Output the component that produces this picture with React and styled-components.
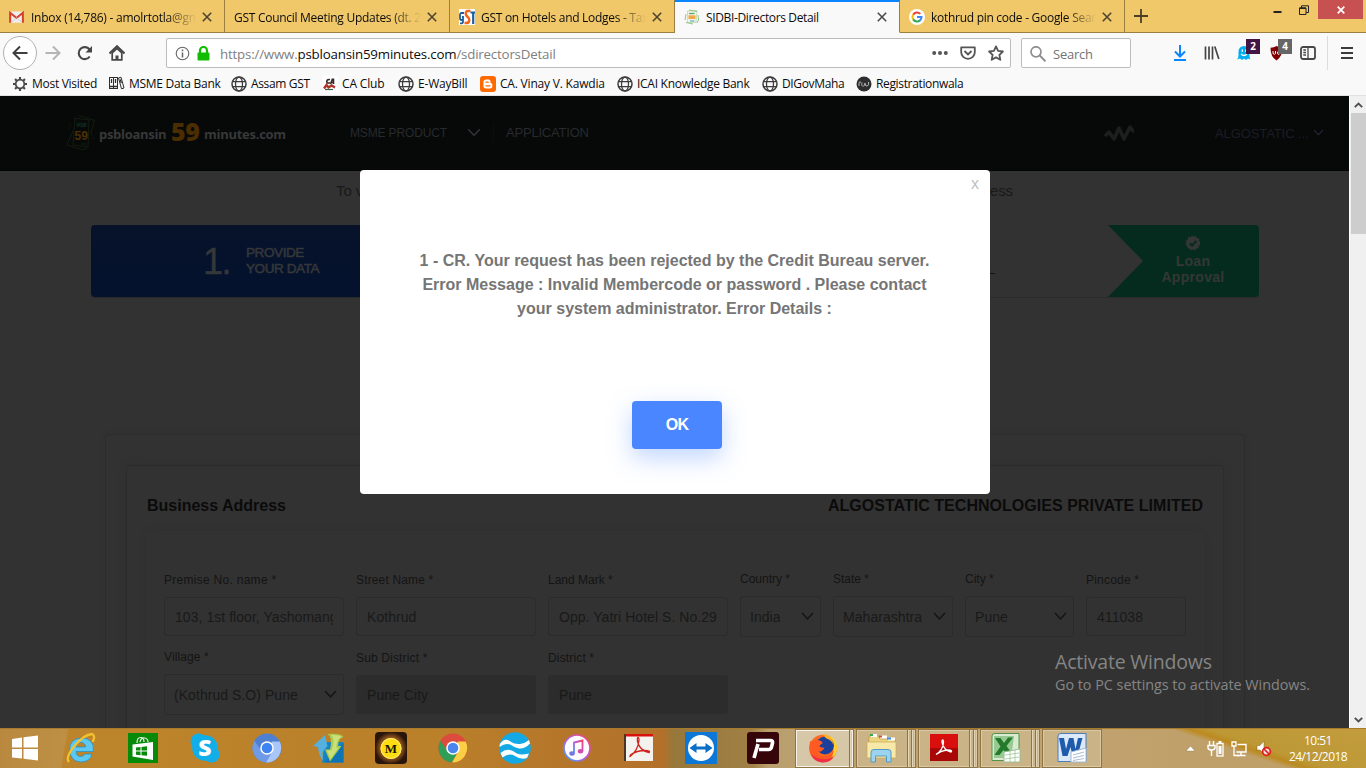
import React from "react";
import styled, { createGlobalStyle, css } from "styled-components";

const ui = `"Open Sans", "Noto Sans", sans-serif`;
const arial = `"Liberation Sans", Arial, sans-serif`;

const Global = createGlobalStyle`
  * { box-sizing: border-box; }
  body { margin: 0; overflow: hidden; background: #323232; }
  svg { display: block; flex: none; }
`;

const Screen = styled.div`
  width: 1366px; height: 768px; display: flex; flex-direction: column;
  overflow: hidden; font-family: ${ui}; color: #0c0c0d;
`;

/* ---------- tab strip ---------- */
const TabStrip = styled.div`
  height: 33px; flex: none; display: flex; background: #f0c869;
`;
const Tab = styled.div`
  width: 225px; height: 33px; display: flex; align-items: center; flex: none;
  padding: 0 12px 0 ${(p) => p.$pad || 9}px; font-size: 12px;
  letter-spacing: ${(p) => p.$ls || -0.28}px;
  border-right: 1px solid #9a7f40; border-bottom: 1px solid #9a7f40;
  ${(p) => p.$active && css`
    background: #f9f9fa; border-bottom-color: #f9f9fa; border-top: 2px solid #0a84ff;
    padding-bottom: 1px;
  `}
`;
const TabIcon = styled.span`width: ${(p) => p.$w || 22}px; flex: none; padding-top: 1px;`;
const TabText = styled.span`
  flex: 1; overflow: hidden; white-space: nowrap; line-height: 20px; padding-top: 3px;
  ${(p) => p.$fade && css`mask-image: linear-gradient(to right, #000 calc(100% - 30px), transparent);`}
`;
const TabClose = styled.span`margin-left: 6px; flex: none; padding-top: 1px;`;
const StripEnd = styled.div`
  flex: 1; display: flex; justify-content: space-between; align-items: flex-start;
  border-bottom: 1px solid #9a7f40; padding: 0 3px 0 9px;
`;
const NewTab = styled.div`padding-top: 9px;`;
const WinControls = styled.div`display: flex;`;
const WinBox = styled.div`
  height: 19px; width: ${(p) => p.$w}px; display: flex; align-items: center; justify-content: center;
  background: ${(p) => (p.$red ? "#c75050" : "transparent")};
`;

/* ---------- toolbar ---------- */
const Toolbar = styled.div`
  height: 40px; flex: none; background: #f9f9fa; display: flex; align-items: center; padding-left: 3px;
`;
const BackButton = styled.div`
  width: 34px; height: 34px; border-radius: 50%; border: 1px solid #b1b1b1; background: #fff;
  display: flex; align-items: center; justify-content: center;
`;
const NavButton = styled.div`
  width: 32px; display: flex; justify-content: center; margin-left: ${(p) => p.$ml || 0}px;
`;
const UrlBar = styled.div`
  width: 845px; height: 30px; margin-left: 33px; background: #fff; border: 1px solid #bcbcbc;
  border-radius: 2px; display: flex; align-items: center; padding: 0 6px 0 8px;
`;
const Url = styled.span`
  flex: 1; margin-left: 10px; font-size: 13.3px; color: #808080; white-space: nowrap; padding-top: 1px;
  letter-spacing: -0.19px;
  b { color: #0c0c0d; font-weight: 400; }
`;
const UrlActions = styled.div`display: flex; gap: 12px; align-items: center;`;
const SearchBox = styled.div`
  width: 110px; height: 30px; margin-left: 10px; background: #fff; border: 1px solid #bcbcbc;
  border-radius: 2px; display: flex; align-items: center; gap: 7px; padding: 1px 0 0 8px;
  font-size: 13px; letter-spacing: -0.25px; color: #737373;
`;
const ToolIcons = styled.div`display: flex; align-items: center; margin-left: 41px;`;
const ToolIcon = styled.div`width: ${(p) => p.$w || 16}px; margin-right: ${(p) => p.$mr || 0}px;`;
const BadgedIcon = styled(ToolIcon)`position: relative;`;
const Badge = styled.span`
  position: absolute; left: 9px; top: -6px; width: 14px; height: 15px; background: ${(p) => p.$c};
  color: #fff; font: 700 10px/15px ${ui}; text-align: center;
`;
const Divider = styled.div`width: 1px; height: 34px; background: #dcdcdd; margin: 0 13px 0 11px;`;

const Bookmarks = styled.div`
  height: 23px; flex: none; background: #f9f9fa; border-bottom: 1px solid #e1e1e2; display: flex;
  padding: 0 0 0 12px;
`;
const Bookmark = styled.div`
  width: ${(p) => p.$w}px; display: flex; align-items: center; gap: 4px; font-size: 12px;
  letter-spacing: ${(p) => p.$ls || -0.28}px; white-space: nowrap; flex: none; padding-bottom: 1px;
  color: #0c0c0d;
`;

/* ---------- page ---------- */
const Viewport = styled.div`height: 632px; flex: none; display: flex;`;
const Page = styled.div`
  width: 1349px; height: 632px; position: relative; overflow: hidden; background: #323232;
  font-family: ${arial};
`;
const Header = styled.header`
  height: 75px; background: #060908; display: flex; align-items: center; padding-left: 65px;
  border-bottom: 1px solid #030404;
`;
const Brand = styled.div`
  width: 285px; display: flex; align-items: center; font-family: ${ui}; font-weight: 700;
  font-size: 13px; color: #383838; height: 40px; white-space: nowrap;
`;
const BrandNumber = styled.span`
  font-size: 25px; font-weight: 800; color: #4b2d02; width: 33px; margin-left: 4px;
  line-height: 25px; padding-bottom: 3px; letter-spacing: -0.4px;
`;
const BrandWord = styled.span`
  width: ${(p) => p.$w}px; margin: 2px 0 0 ${(p) => p.$ml || 0}px; letter-spacing: ${(p) => p.$ls}px;
`;
const NavText = styled.span`
  font-size: ${(p) => p.$s || 13}px; color: ${(p) => p.$c || "#282a2f"}; width: ${(p) => p.$w}px;
  letter-spacing: ${(p) => p.$ls || 0}px; white-space: nowrap; padding-bottom: ${(p) => p.$pb || 0}px;
`;
const NavRule = styled.span`width: 1px; height: 18px; background: #0b0e0d; margin: 0 12px 0 12px;`;
const Spacer = styled.span`width: ${(p) => p.$w}px; flex: none;`;

const Intro = styled.div`
  height: 54px; padding: 11px 336px 0; display: flex; justify-content: space-between;
  font-size: 15px; line-height: 18px; color: #191919; letter-spacing: -0.1px;
`;
const Stepper = styled.div`
  width: 1168px; height: 73px; margin-left: 91px; display: flex; justify-content: space-between;
  border-radius: 4px; border-bottom: 1px solid #2a2a2a; position: relative;
`;
const StepOne = styled.div`
  width: 380px; height: 72px; border-radius: 4px 0 0 4px; background: linear-gradient(#07122a, #04122e);
  display: flex; align-items: center; padding-left: 112px; color: #353739;
`;
const StepNumber = styled.span`
  font-size: 36px; width: 43px; padding-top: 2px; letter-spacing: -1.5px; -webkit-text-stroke: 0.4px #353739;
`;
const StepLabel = styled.span`
  font-size: 13.5px; line-height: 16px; letter-spacing: -0.4px; padding-bottom: 1px;
  -webkit-text-stroke: 0.55px #353739;
`;
const StepTwo = styled.div`
  flex: 1; display: flex; justify-content: flex-end; align-items: flex-end; padding: 0 113px 20px 0;
  font-size: 14px; line-height: 16px; color: #0d141f;
`;
const StepDone = styled.div`
  width: 151px; height: 72px; background: #052b1e; border-radius: 0 4px 4px 0;
  clip-path: polygon(0 0, 100% 0, 100% 100%, 0 100%, 35px 50%);
  display: flex; flex-direction: column; align-items: center; padding: 10px 0 0 19px;
  font: 700 14px/16px ${arial}; letter-spacing: 0.3px; color: #343735; text-align: center;
`;
const DoneText = styled.span`margin-top: 2px;`;

const Card = styled.section`
  width: 1140px; height: 320px; margin: 136px 0 0 105px; border: 1px solid #2c2c2c;
  border-radius: 4px 4px 0 0; padding: 30px 20px 0; box-shadow: 0 0 8px rgba(0,0,0,0.03);
`;
const Inner = styled.div`
  height: 300px; border: 1px solid #2b2b2b; border-radius: 4px 4px 0 0; padding: 29px 19px 0;
  box-shadow: 0 0 12px rgba(0,0,0,0.06);
`;
const Heads = styled.div`
  display: flex; justify-content: space-between; font-size: 16px; font-weight: 700;
  line-height: 20px; color: #0b0b0b; height: 36px; padding: 1px 1px 0;
`;
const Company = styled.span`letter-spacing: ${(p) => p.$ls}px;`;
const FormPanel = styled.div`
  height: 230px; border-radius: 6px; padding: 40px 18px 0; box-shadow: 0 0 8px rgba(0,0,0,0.07);
  display: flex; flex-direction: column; gap: 12px;
`;
const Row = styled.div`display: flex; gap: 12px; align-items: center; height: 66px;`;
const Field = styled.label`width: ${(p) => p.$w}px; display: flex; flex-direction: column; gap: 9px;`;
const FieldLabel = styled.span`font-size: 12px; line-height: 16px; color: #141414; letter-spacing: ${(p) => p.$ls || 0}px;`;
const Control = styled.span`
  height: ${(p) => (p.$select ? 41 : 39)}px; border: 1px solid ${(p) => (p.$off ? "#2c2c2c" : "#2b2b2b")};
  background: ${(p) => (p.$off ? "#2c2c2c" : "transparent")}; border-radius: 3px;
  display: flex; align-items: center; justify-content: space-between;
  padding: ${(p) => (p.$select ? "0 6px 0 9px" : "0 10px")};
  font-size: 14px; letter-spacing: 0.05px; color: #191919;
`;
const Value = styled.span`overflow: hidden; white-space: nowrap; line-height: 18px;`;

const Watermark = styled.div`
  position: absolute; left: 1055px; top: 554px; font-family: ${ui}; color: #858585; white-space: nowrap;
`;
const MarkTitle = styled.div`font-size: 19.5px; line-height: 24px; letter-spacing: ${(p) => p.$ls}px;`;
const MarkText = styled.div`font-size: 14.4px; line-height: 21px; letter-spacing: ${(p) => p.$ls}px;`;

const Modal = styled.div`
  position: absolute; left: 360px; top: 74px; width: 630px; height: 324px; background: #fff;
  border-radius: 4px; padding: 79px 47px 0 46px; display: flex; flex-direction: column; align-items: center;
`;
const ModalClose = styled.span`
  position: absolute; right: 11px; top: 5px; font: 16px/18px ${arial}; color: #bfbfbf;
`;
const Message = styled.p`
  margin: 0; font-size: 16px; line-height: 24px; font-weight: 700; color: #757575; text-align: center;
  white-space: nowrap; height: 152px;
`;
const OkButton = styled.button`
  width: 90px; height: 48px; border: 0; border-radius: 4px; background: #4986ff; color: #fff;
  font: 700 16px ${arial}; margin-left: 5px; padding: 0; letter-spacing: -0.8px;
  box-shadow: 0 9px 24px rgba(73,134,255,0.34);
`;

const Scrollbar = styled.div`
  width: 17px; background: #f0f0f0; display: flex; flex-direction: column; align-items: center;
  justify-content: space-between; border-left: 1px solid #fff;
`;
const ScrollTop = styled.div`display: flex; flex-direction: column; align-items: center; width: 16px;`;
const ScrollArrow = styled.div`height: 17px; display: flex; align-items: center;`;
const ScrollThumb = styled.div`width: 15px; height: 121px; background: #cdcdcd;`;

/* ---------- taskbar ---------- */
const Taskbar = styled.div`
  height: 40px; flex: none; display: flex; align-items: center; border-top: 1px solid #a87a2c;
  background:
    linear-gradient(100deg, #b9883e 0, #bd9046 66px, transparent 68px),
    linear-gradient(198.4deg, #c39d3e 0, #bd9835 50px, #bb8a20 56px, transparent 62px) no-repeat right top / 190px 40px,
    linear-gradient(to right, #bd852b 0, #ba802a 440px, #b5762a 560px, #b3702a 664px, #97783a 672px, #a08044 752px, #b99f6d 768px, #c2a574 1000px, #c0a06a 1180px, #c0a068 1366px);
`;
const Pinned = styled.div`width: ${(p) => p.$w || 62}px; display: flex; justify-content: center; flex: none; padding-bottom: 2px;`;
const TaskButton = styled.div`
  width: ${(p) => p.$w}px; height: 39px; flex: none; margin-right: ${(p) => p.$mr || 3}px;
  display: flex; border: 1px solid #8f7546;
  background: ${(p) => (p.$active ? "#d5c7a8" : "#c9b387")};
  box-shadow: inset 0 0 0 1px ${(p) => (p.$active ? "#f7f3ea" : "#d9c9a6")};
`;
const TaskFace = styled.div`flex: 1; display: flex; align-items: center; justify-content: center; padding-bottom: 1px;`;
const StackEdge = styled.div`width: 4px; border-left: 1px solid #8f7546; box-shadow: inset 1px 0 #e2d5b8;`;
const Tray = styled.div`flex: 1; display: flex; align-items: center; padding-left: 81px;`;
const TrayIcon = styled.div`width: ${(p) => p.$w}px; display: flex; flex: none;`;
const Clock = styled.div`
  width: 66px; margin-left: 13px; text-align: center; font-size: 12px; line-height: 16.5px; color: #fff;
  letter-spacing: -0.55px; white-space: nowrap; padding-top: 1px;
`;

/* ---------- icons ---------- */
const Svg = ({ w = 16, h, vb, children, ...r }) => (
  <svg width={w} height={h || w} viewBox={vb || `0 0 ${w} ${h || w}`} fill="none" {...r}>{children}</svg>
);
const Cross = ({ c = "#4d4430", w = 10 }) => (
  <Svg w={w} vb="0 0 10 10"><path d="M.8.8l8.4 8.4M9.2.8L.8 9.2" stroke={c} strokeWidth="1.6" /></Svg>
);
const Chevron = ({ w = 12, c = "#151515" }) => (
  <Svg w={w} h={w * 0.67} vb="0 0 12 8"><path d="M1 1l5 5.3L11 1" stroke={c} strokeWidth="1.4" /></Svg>
);
const Gmail = () => (
  <Svg w={15} h={12} vb="0 0 16 12">
    <rect x="1" width="14" height="12" rx="1" fill="#eee" /><path d="M1.2 12V1.5l6.8 5.5 6.8-5.5V12" stroke="#d9412f" strokeWidth="2.2" />
    <path d="M3 11l5-4 5 4" stroke="#cfcfcf" />
  </Svg>
);
const GstIcon = () => (
  <Svg w={16}>
    <rect width="16" height="16" fill="#fff" />
    <path d="M5 4H2.5Q1 4 1 6v3q0 2 1.5 2H4V8H3M4 11v2q0 1.5-3 1.3" stroke="#1d5f9c" strokeWidth="1.8" />
    <path d="M11.5 2H9Q6.5 2 6.8 5q.2 1.5 2 3t1.5 3.5Q10 14 7 14H5.5" stroke="#f4661e" strokeWidth="2.5" />
    <path d="M11.5 3.5H16M14.2 3.5V15" stroke="#1d5f9c" strokeWidth="2.2" />
  </Svg>
);
const SidbiIcon = () => (
  <Svg w={16}>
    <path d="M3.5 2l9.5-.5-1 12-8.5 0z" fill="#f4f3ea" stroke="#c9dfbe" />
    <path d="M5 1l8 1.5M2 5l-1 6M2 13.5l7 1.5M14 6l.5 5-1.5 3" stroke="#8fc77c" />
    <path d="M5 4.5h5.5" stroke="#5aa77a" strokeWidth="1.4" /><rect x="4.5" y="6.3" width="7" height="3.7" fill="#f2a844" />
    <path d="M6 12h4.5" stroke="#5ab0c8" strokeWidth="1.2" />
  </Svg>
);
const GoogleIcon = () => (
  <Svg w={16}>
    <circle cx="8" cy="8" r="8" fill="#fff" />
    <g strokeWidth="2.1">
      <path d="M4.2 5.6A4.5 4.5 0 0 1 11.3 4.9" stroke="#ea4335" /><path d="M4.2 10.4a4.6 4.6 0 0 1 0-4.8" stroke="#fbbc05" />
      <path d="M11 11.4a4.5 4.5 0 0 1-6.8-1" stroke="#34a853" /><path d="M8 8h4.5q0 2-1.5 3.4" stroke="#4285f4" />
    </g>
  </Svg>
);
const Globe = () => (
  <Svg w={16}>
    <g stroke="#3d3d3d" strokeWidth="1.25"><circle cx="8" cy="8" r="7" strokeWidth="1.5" /><ellipse cx="8" cy="8" rx="3.5" ry="7" /><path d="M1.5 5.5h13M1.5 10.5h13" /></g>
  </Svg>
);
const Gear = () => (
  <Svg w={16}>
    <circle cx="8" cy="8" r="4.3" stroke="#4a4a4a" strokeWidth="1.7" />
    {[0, 45, 90, 135, 180, 225, 270, 315].map((a) => (
      <path key={a} d="M8 1v3" stroke="#4a4a4a" strokeWidth="2.1" transform={`rotate(${a} 8 8)`} />
    ))}
  </Svg>
);
const Binders = () => (
  <Svg w={17} h={15}>
    <g stroke="#2f2f2f"><rect x="1.5" y="1.5" width="4" height="11" /><rect x="5.5" y="1.5" width="4" height="11" /><path d="M10.5 2l2.5-.8 3 10.8-2.5.8z" /><path d="M3.5 3v4M7.5 3v4M12.3 3.5l1 3.5" strokeWidth="1.3" /><path d="M1 10.5h9" strokeWidth="1.5" /></g>
  </Svg>
);
const CaClub = () => (
  <Svg w={16}>
    <rect width="16" height="16" fill="#fff" />
    <path d="M8 3.5Q4 3 5 7h3M8.5 8l1.8-4.8h1.2V8M9.5 6.5h2" stroke="#352a25" strokeWidth="1.6" />
    <path d="M2 12.5l2.5-3.5 2 2.5 3-2 3.5 2" stroke="#ad3428" strokeWidth="2.4" /><path d="M3 13.5h8" stroke="#39624a" strokeWidth="1.2" />
  </Svg>
);
const Blogger = () => (
  <Svg w={16}>
    <rect width="16" height="16" rx="3" fill="#ff6a00" />
    <path d="M6 3.5h2.5a2 2 0 0 1 2 2v1q0 .7.8.7t1 .8V10a2.5 2.5 0 0 1-2.5 2.5H6A2.5 2.5 0 0 1 3.5 10V6A2.5 2.5 0 0 1 6 3.5z" fill="#fff" />
    <path d="M6 6.2h2.2M6 9.8h4" stroke="#ff6a00" strokeWidth="1.3" strokeLinecap="round" />
  </Svg>
);
const RwIcon = () => (
  <Svg w={16}>
    <circle cx="8" cy="8" r="7.5" fill="#2e2e2e" />
    <path d="M3 10V6.5q1-1.5 2 0M6 6.5q-1 4 1.5 3.5Q9 10 9 7q0 3.5 2 3 2.5-.5 1.5-4" stroke="#b5b5b5" strokeWidth="1" />
  </Svg>
);

const Verified = () => (
  <Svg w={16}>
    <circle cx="8" cy="8" r="6.3" fill="#343735" />
    <circle cx="8" cy="8" r="6.4" stroke="#343735" strokeWidth="1.6" strokeDasharray="2.5 .9" />
    <path d="M4.7 8.2l2.4 2.3 4.3-4.6" stroke="#052b1e" strokeWidth="2" />
  </Svg>
);
const BrandMark = () => (
  <Svg w={32} h={38}>
    <g stroke="#161f10" strokeWidth=".9"><path d="M10 4l14 2-1 27-15-2zM14 1.5l15.5 5-4 14M8 17L2 31l16 5 4-2" /></g>
    <g stroke="#151c14" strokeDasharray="2 2"><path d="M6 10q-4 4-1 8M26 20q4 3 1 6" /></g>
    <path d="M11 7l12 1v5H11z" fill="#080d12" />
    <text x="12" y="13" fontFamily="Open Sans" fontSize="5" fontWeight="700" fill="#0c3319">PSB</text>
    <text x="9.5" y="26" fontFamily="Liberation Sans" fontSize="12" fontWeight="700" fill="#4d2f05">59</text>
    <path d="M16 30h5" stroke="#0a1c1a" strokeWidth="1.5" />
  </Svg>
);

const ChromeLogo = ({ a, b, c, d }) => (
  <Svg w={30}>
    <circle cx="15" cy="15" r="14.5" fill={a} />
    <path d="M2.4 7.8A14.5 14.5 0 0 0 14 29.5L20 18l-5-1-5.5 1z" fill={b} />
    <path d="M27.7 8.5A14.5 14.5 0 0 1 14 29.5L20.5 18 19.5 8.5z" fill={c} />
    <circle cx="15" cy="15" r="6.8" fill="#fff" /><circle cx="15" cy="15" r="5.3" fill={d} />
  </Svg>
);

function BrowserChrome() {
  return (
    <>
      <TabStrip>
        <Tab $ls={-0.25}><TabIcon><Gmail /></TabIcon><TabText $fade>Inbox (14,786) - amolrtotla@gm</TabText><TabClose><Cross /></TabClose></Tab>
        <Tab><TabText $fade>GST Council Meeting Updates (dt. 2</TabText><TabClose><Cross /></TabClose></Tab>
        <Tab><TabIcon><GstIcon /></TabIcon><TabText $fade>GST on Hotels and Lodges - Tax</TabText><TabClose><Cross /></TabClose></Tab>
        <Tab $active $ls={-0.35}><TabIcon><SidbiIcon /></TabIcon><TabText>SIDBI-Directors Detail</TabText><TabClose><Cross c="#4a4a4a" /></TabClose></Tab>
        <Tab><TabIcon><GoogleIcon /></TabIcon><TabText $fade>kothrud pin code - Google Sear</TabText><TabClose><Cross /></TabClose></Tab>
        <StripEnd>
          <NewTab><Svg w={14}><path d="M7 0v14M0 7h14" stroke="#4b4027" strokeWidth="1.8" /></Svg></NewTab>
          <WinControls>
            <WinBox $w={26}><Svg w={9} h={9}><path d="M.5 7h8" stroke="#222" strokeWidth="2" /></Svg></WinBox>
            <WinBox $w={28}><Svg w={10}><path d="M.5 3h6.5v6.5H.5zM2.5 3V.8h7V7.5H7" stroke="#222" /><path d="M.5 3.2h6.5" stroke="#222" strokeWidth="1.5" /></Svg></WinBox>
            <WinBox $w={45} $red><Svg w={8}><path d="M.7.7l6.6 6.6M7.3.7L.7 7.3" stroke="#fff" strokeWidth="1.7" /></Svg></WinBox>
          </WinControls>
        </StripEnd>
      </TabStrip>
      <Toolbar>
        <BackButton><Svg w={16}><path d="M15.5 8H1.5M8 1.5L1.5 8 8 14.5" stroke="#3f3f40" strokeWidth="2" /></Svg></BackButton>
        <NavButton><Svg w={16}><path d="M.5 8h14M8 1.5L14.5 8 8 14.5" stroke="#b4b4b5" strokeWidth="2" /></Svg></NavButton>
        <NavButton><Svg w={16}><path d="M12.7 11.5A6 6 0 1 1 12.5 4.5" stroke="#464647" strokeWidth="2.1" /><path d="M15 1v6.500H8.5z" fill="#464647" /></Svg></NavButton>
        <NavButton><Svg w={16}><path d="M.5 8.5L8 1.2l7.5 7.3" stroke="#464647" strokeWidth="2" /><path d="M3.2 8v6.8h9.6V8L8 3.5z" stroke="#464647" strokeWidth="1.7" /><path d="M6.5 15v-4.5h3V15" fill="#464647" /></Svg></NavButton>
        <UrlBar>
          <Svg w={15}><circle cx="7.5" cy="7.5" r="6.3" stroke="#666" strokeWidth="1.1" /><path d="M7.5 6.5v5M7.5 3.5v1.7" stroke="#666" strokeWidth="1.5" /></Svg>
          <Spacer $w={7} />
          <Svg w={13} h={15}><path d="M3 7V4.5a3.5 3.5 0 0 1 7 0V7" stroke="#12bc00" strokeWidth="2.2" /><rect x="0.5" y="6.5" width="12" height="8" rx="1" fill="#12bc00" /></Svg>
          <Url>https://www.<b>psbloansin59minutes.com</b>/sdirectorsDetail</Url>
          <UrlActions>
            <Svg w={16}><g fill="#555"><circle cx="2.2" cy="8" r="2" /><circle cx="8" cy="8" r="2" /><circle cx="13.8" cy="8" r="2" /></g></Svg>
            <Svg w={16}><path d="M1.2 2.3h13.6v5a6.8 6.5 0 0 1-13.6 0z" stroke="#555" strokeWidth="1.8" strokeLinejoin="round" /><path d="M4.5 6l3.5 3.4L11.5 6" stroke="#555" strokeWidth="1.9" /></Svg>
            <Svg w={16}><path d="M8 1.4l2.1 4.5 4.8.6-3.5 3.4.9 4.9L8 12.4l-4.3 2.4.9-4.9L1.1 6.5l4.8-.6z" stroke="#555" strokeWidth="1.8" strokeLinejoin="round" /></Svg>
          </UrlActions>
        </UrlBar>
        <SearchBox><Svg w={16}><circle cx="6" cy="5.8" r="5" stroke="#8f8f8f" strokeWidth="1.7" /><path d="M9.5 9.3l6 6" stroke="#8f8f8f" strokeWidth="2" /></Svg>Search</SearchBox>
        <ToolIcons>
          <ToolIcon $mr={16}><Svg w={16}><path d="M8 0v11M3 6.5L8 11.5 13 6.5" stroke="#0a84ff" strokeWidth="2" /><path d="M2 15h12" stroke="#0a84ff" strokeWidth="2" /></Svg></ToolIcon>
          <ToolIcon $mr={17}><Svg w={16}><path d="M1.5 1.5v13M5 1.5v13M8.5 1.5v13M10.8 1.5l4 12.5" stroke="#464647" strokeWidth="1.7" /></Svg></ToolIcon>
          <BadgedIcon $mr={16}>
            <Svg w={16}><path d="M0 14.5q1.5-1.5 1.5-4V6.500a5.5 5.5 0 0 1 11 0V10.5q0 2.5 1 4l-2.5-1-2 1.5L7 13.5 5 15l-2-1.5z" fill="#00aef0" /><path d="M5.3 4.5v2.3M8.7 4.5v2.3M4 9q3 3 6 0" stroke="#fff" strokeWidth="1.3" /></Svg>
            <Badge $c="#421543">2</Badge>
          </BadgedIcon>
          <BadgedIcon $mr={15}>
            <Svg w={16}><path d="M7.5 1q3 1.8 6 1.8 0 9-6 12.7Q1.5 12 1.5 2.8 5 2.8 7.5 1z" fill="#800000" /><path d="M4 6v2.5q1.5 1.5 2.5 0V6M10.5 6.5q-2.5-.5-2 2 .5 1.5 2 .5" stroke="#fff" /></Svg>
            <Badge $c="#666">4</Badge>
          </BadgedIcon>
          <ToolIcon><Svg w={16}><rect x="1" y="2" width="14" height="12" rx="2" stroke="#464647" strokeWidth="1.8" /><path d="M8 2v12M3.3 5h2.7M3.3 7.5h2.7M3.3 10h2.7" stroke="#464647" strokeWidth="1.3" /></Svg></ToolIcon>
          <Divider />
          <Svg w={12} h={14}><path d="M0 2h12M0 7h12M0 12h12" stroke="#3b3b3c" strokeWidth="2" /></Svg>
        </ToolIcons>
      </Toolbar>
      <Bookmarks>
        <Bookmark $w={96}><Gear />Most Visited</Bookmark>
        <Bookmark $w={123}><Binders />MSME Data Bank</Bookmark>
        <Bookmark $w={91} $ls={-0.35}><Globe />Assam GST</Bookmark>
        <Bookmark $w={76} $ls={-0.15}><CaClub />CA Club</Bookmark>
        <Bookmark $w={82} $ls={-0.2}><Globe />E-WayBill</Bookmark>
        <Bookmark $w={137} $ls={-0.2}><Blogger />CA. Vinay V. Kawdia</Bookmark>
        <Bookmark $w={145}><Globe />ICAI Knowledge Bank</Bookmark>
        <Bookmark $w={94} $ls={-0.35}><Globe />DIGovMaha</Bookmark>
        <Bookmark $w={120} $ls={-0.35}><RwIcon />Registrationwala</Bookmark>
      </Bookmarks>
    </>
  );
}

function FormField({ label, value, w, select, off, ls }) {
  return (
    <Field $w={w}>
      <FieldLabel $ls={ls}>{label}</FieldLabel>
      <Control $select={select} $off={off}><Value>{value}</Value>{select && <Chevron w={13} />}</Control>
    </Field>
  );
}

function PageContent() {
  return (
    <Page>
      <Header>
        <Brand>
          <BrandMark />
          <BrandWord $w={68} $ml={2} $ls={-0.3}>psbloansin</BrandWord>
          <BrandNumber>59</BrandNumber>
          <BrandWord $w={82} $ls={-0.27}>minutes.com</BrandWord>
        </Brand>
        <NavText $s={12} $ls={-0.15} $w={117}>MSME PRODUCT</NavText>
        <Chevron w={14} c="#303236" />
        <NavRule />
        <NavText $w={98} $ls={-0.2} $pb={2}>APPLICATION</NavText>
        <Spacer $w={500} />
        <Svg w={30} h={16}><path d="M2 10l3-3 5 7 5-11 5 11 6-12 3 4" stroke="#1d1f1e" strokeWidth="3.5" strokeLinejoin="round" strokeLinecap="round" /></Svg>
        <Spacer $w={81} />
        <NavText $w={98} $ls={-0.1} $c="#1b1d26">ALGOSTATIC ...</NavText>
        <Chevron w={11} c="#222531" />
      </Header>
      <Intro><span>To v</span><span>ess</span></Intro>
      <Stepper>
        <StepOne><StepNumber>1.</StepNumber><StepLabel>PROVIDE<br />YOUR DATA</StepLabel></StepOne>
        <StepTwo>APPROVAL</StepTwo>
        <StepDone><Verified /><DoneText>Loan<br />Approval</DoneText></StepDone>
      </Stepper>
      <Card>
        <Inner>
          <Heads><span>Business Address</span><Company $ls={0.03}>ALGOSTATIC TECHNOLOGIES PRIVATE LIMITED</Company></Heads>
          <FormPanel>
            <Row>
              <FormField w={180} ls={0.28} label="Premise No. name *" value="103, 1st floor, Yashomang" />
              <FormField w={180} ls={0.15} label="Street Name *" value="Kothrud" />
              <FormField w={180} label="Land Mark *" value="Opp. Yatri Hotel S. No.29" />
              <FormField w={81} select label="Country *" value="India" />
              <FormField w={120} select label="State *" value="Maharashtra" />
              <FormField w={109} select label="City *" value="Pune" />
              <FormField w={100} ls={0.2} label="Pincode *" value="411038" />
            </Row>
            <Row>
              <FormField w={180} select ls={0.1} label="Village *" value="(Kothrud S.O) Pune" />
              <FormField w={180} off ls={0.15} label="Sub District *" value="Pune City" />
              <FormField w={180} off ls={0.15} label="District *" value="Pune" />
            </Row>
          </FormPanel>
        </Inner>
      </Card>
      <Watermark>
        <MarkTitle $ls={-0.2}>Activate Windows</MarkTitle>
        <MarkText $ls={-0.03}>Go to PC settings to activate Windows.</MarkText>
      </Watermark>
      <Modal>
        <ModalClose>x</ModalClose>
        <Message>
          1 - CR. Your request has been rejected by the Credit Bureau server.<br />
          Error Message : Invalid Membercode or password . Please contact<br />
          your system administrator. Error Details :
        </Message>
        <OkButton>OK</OkButton>
      </Modal>
    </Page>
  );
}

function Tasks() {
  return (
    <Taskbar>
      <Pinned $w={50}><Svg w={28} h={26}><path d="M1 4l10-1.5v10H1zM12.5 2.2L27 .5v12H12.5zM1 14h10v9.5L1 22.5zM12.5 14H27v11.5l-14.5-1.7z" fill="#fff" /></Svg></Pinned>
      <Pinned>
        <Svg w={32} h={32}>
          <path d="M27 22H20q-1.5 2.5-4.5 2.5-4 0-4.5-5h17.500Q29.5 6 16 6 4.5 7 4.5 18 5.5 29.5 16 30q9 0 11-8zM11 15q1-4.5 5-4.5t4.7 4.5z" fill="#5cc9f2" stroke="#2b8fc4" strokeWidth=".8" />
          <path d="M4 30Q0 26 9 14.5 19 2.5 27 2q4 1.5.5 8" stroke="#f3c12f" strokeWidth="2.3" />
        </Svg>
      </Pinned>
      <Pinned>
        <Svg w={30}><rect width="30" height="30" fill="#078a07" /><path d="M4.5 11.5L25 9v18L4.5 23.5z" fill="#fff" /><path d="M9 10q0-5.500 3.5-5.5T16 9M12 9q1-4.5 4.5-4T20 9" stroke="#e6f2e6" strokeWidth="1.2" /><path d="M8 14.5l4.5-.5v3.5H8zM13.5 13.9l5.5-.6v4.2h-5.5zM8 18.5h4.5v3.7l-4.5-.5zM13.5 18.5H19v4.3l-5.5-.5z" fill="#078a07" /></Svg>
      </Pinned>
      <Pinned>
        <Svg w={30}><circle cx="15" cy="15" r="12.8" fill="#12aee8" /><circle cx="8.5" cy="8.5" r="8" fill="#12aee8" /><circle cx="21.5" cy="21.5" r="8" fill="#12aee8" /><text x="15" y="23" textAnchor="middle" fontFamily="Open Sans" fontWeight="800" fontSize="23" fill="#fff">S</text></Svg>
      </Pinned>
      <Pinned><ChromeLogo a="#4f7fd1" b="#6e9ae6" c="#a9c6fb" d="#3f83f2" /></Pinned>
      <Pinned>
        <Svg w={32} h={30}><path d="M12 9h18.500V29.500H9z" fill="#1583c4" /><path d="M11 29.500L30.500 10v19.500z" fill="#0f74b5" /><path d="M0 13L12 2l2.500 11-5 6 .5 8.500Q6 24 5 14z" fill="#55b0de" /><path d="M14.500 1Q28 0 30.500 4q-5 .5-5.500 9h3.500L17 28.500l-5-12h5Q20 4 14.500 1z" fill="#a9cc4c" /><path d="M18 2q8-.5 11 2-5 1-6 10.500h2.500L17.500 26 14 17.500h4.500Q23 6 18 2z" fill="#cbdf7b" /></Svg>
      </Pinned>
      <Pinned>
        <Svg w={32}>
          <defs><radialGradient id="mg"><stop offset="0" stopColor="#f5b24a" /><stop offset=".6" stopColor="#a35f22" /><stop offset="1" stopColor="#2a150a" /></radialGradient></defs>
          <rect width="32" height="32" rx="4" fill="url(#mg)" /><circle cx="16" cy="16.5" r="10.5" fill="#fddc12" /><circle cx="16" cy="16.5" r="10" stroke="#ffef7c" />
          <text x="16" y="21" textAnchor="middle" fontFamily="Liberation Serif" fontWeight="700" fontSize="13" fill="#1b1200">M</text>
        </Svg>
      </Pinned>
      <Pinned><ChromeLogo a="#dc4b3e" b="#2f9e57" c="#fcce44" d="#4a86ee" /></Pinned>
      <Pinned>
        <Svg w={32}>
          <circle cx="16" cy="16" r="15.8" fill="#12a9e4" />
          <path d="M.8 12Q5 6 10 8.500q5 4 11 3.500 5-.5 9-4l1 3.500Q26 17 20 16.500q-4-.5-8-3.500-5-3-11.500 2z" fill="#fff" />
          <path d="M1.500 21Q6 17 11 18q3 .5 6 3t13 .5l-2 4.500q-6 2-12-2-6-3.500-12.500 1.500z" fill="#fff" />
        </Svg>
      </Pinned>
      <Pinned>
        <Svg w={28}>
          <defs><linearGradient id="it" x1="1" x2="0" y2="1"><stop stopColor="#f9416a" /><stop offset=".5" stopColor="#b95ad8" /><stop offset="1" stopColor="#35a8f0" /></linearGradient></defs>
          <circle cx="14" cy="14" r="13" fill="#fdfbfd" stroke="url(#it)" strokeWidth="1.7" />
          <path d="M11 19.5V8.5l8.5-2v10.5" stroke="url(#it)" strokeWidth="1.8" /><ellipse cx="9" cy="19.5" rx="2.7" ry="2.2" fill="#7a73e6" /><ellipse cx="17.5" cy="17.3" rx="2.7" ry="2.2" fill="#d04fae" />
        </Svg>
      </Pinned>
      <Pinned>
        <Svg w={30} h={28}><rect x=".5" width="28.5" height="27" fill="#f4f2ee" /><path d="M.5 0H29v2.500H.5z" fill="#d8110c" /><path d="M1 0v27" stroke="#4a3327" strokeWidth="2" /><path d="M6 22.5q8-6 9-16 0-3-1-3t-.5 4q2 9 11.5 11 2-2-4-2-8 0-14 4-1.5 2-1 2z" stroke="#d0211c" strokeWidth="1.3" /></Svg>
      </Pinned>
      <Pinned>
        <Svg w={32}><rect width="32" height="32" rx="1" fill="#0c77d6" /><circle cx="16" cy="16" r="13" fill="#fff" /><path d="M4.5 16l7-5v3.5h9V11l7 5-7 5v-3.5h-9V21z" fill="#0c6fc8" /></Svg>
      </Pinned>
      <Pinned>
        <Svg w={32}><rect width="32" height="32" rx="3" fill="#360509" /><path d="M7 26l4-14M9 8.5h14.5q2.5 0 2 2.5l-1 4q-.7 2.5-3 2.5H12" stroke="#fff" strokeWidth="3.6" /></Svg>
      </Pinned>
      <Spacer $w={1} />
      <TaskButton $w={59} $mr={2} $active>
        <TaskFace>
          <Svg w={30} h={32}>
            <circle cx="15" cy="16.5" r="13.8" fill="#ff6a20" /><path d="M15 3q14 0 14 14-1 7-6 10 4-8 1-14T15 3z" fill="#ffd02e" />
            <circle cx="17" cy="13.5" r="9" fill="#1c3f9b" /><path d="M16 2q8 1 9.5 11-2-5-6-6-4-2-3.5-5z" fill="#ffb01f" />
            <path d="M2 9q2 1 3.5 0 3-2 6-.5 3 .5 3 3-3 1-3 3 2 1.5 5 1-2 5-7 4 2 5 8 4.5 6 0 8-7 0 9-8 11.5-12 2-15.5-8.500Q1 15 2 9z" fill="#ff5a22" /><path d="M3 22q2 7 11 8.5 9 .5 12-7-6 5-12 3.5-6-.5-11-5z" fill="#ef2f45" />
          </Svg>
        </TaskFace>
        <StackEdge />
      </TaskButton>
      <TaskButton $w={60} $mr={2}>
        <TaskFace>
          <Svg w={32} h={30}><path d="M3 3h9l2 3h15v18H2z" fill="#ecd480" stroke="#b99a4a" strokeWidth=".7" /><path d="M5 2.5h6M14 4h7M22 6h7" stroke="#fff" strokeWidth="3" /><path d="M4 2h3" stroke="#38a848" strokeWidth="2" /><path d="M13 3.5h3" stroke="#d84b30" strokeWidth="2" /><path d="M21 5.5h4" stroke="#3d8fe0" strokeWidth="2" /><path d="M1 9h29v16H1z" fill="#f8e9a8" stroke="#c9ab55" strokeWidth=".7" /><path d="M5 29V19q0-2.5 3-2.5h14q3 0 3 2.5v10h-4.5v-6h-11v6z" fill="#9cd3ee" stroke="#569ac4" /></Svg>
        </TaskFace>
        <StackEdge /><StackEdge />
      </TaskButton>
      <TaskButton $w={60} $mr={2}>
        <TaskFace>
          <Svg w={29} h={28}><rect width="28" height="27" fill="#a90808" /><rect width="28" height="14" fill="#d90f0e" /><path d="M6 20.5q7-4.5 7.5-12 0-3-1-2.5t0 4q2 6.5 8.5 8 2-2-3-2-7 .5-12 4.5z" stroke="#fff" strokeWidth="1.3" /></Svg>
        </TaskFace>
        <StackEdge /><StackEdge />
      </TaskButton>
      <TaskButton $w={60} $mr={2}>
        <TaskFace>
          <Svg w={30}><path d="M1 3q0-2.5 3-2.5h24v27H1z" fill="#d9ecd2" stroke="#53944a" /><path d="M3 3h20l-3 22H3z" fill="#57a551" opacity=".5" /><path d="M4 5h5.5l3.5 5 4-5.500H22L15.5 13l6.5 9h-6l-3.5-5-4 5H3.5l6-8.5z" fill="#237a2b" /><path d="M13 19l16-3v13H13z" fill="#fff" stroke="#9cbf98" /><path d="M14 22l14-2M14 26l14-2M19 18v11M24 17v12" stroke="#9cc795" strokeWidth=".8" /></Svg>
        </TaskFace>
        <StackEdge /><StackEdge />
      </TaskButton>
      <TaskButton $w={60}>
        <TaskFace>
          <Svg w={30}><path d="M1 3q0-2.5 3-2.5h25v28H1z" fill="#dbe8f8" stroke="#4a7dbd" /><path d="M2 5h5l2 11 3-11h4.5l2 11 2.5-11h4.5l-5 18h-5l-2-9-3 9h-5z" fill="#1f5bad" /><path d="M14 19l15-4v14H14z" fill="#fff" stroke="#9fb8d8" /><path d="M16 22l11-3M16 25l11-2.5M16 27.5l11-2" stroke="#90abc9" strokeWidth=".8" /></Svg>
        </TaskFace>
      </TaskButton>
      <Tray>
        <TrayIcon $w={21}><Svg w={9} h={6}><path d="M4.5 0L9 5H0z" fill="#fff" stroke="#8c7440" strokeWidth=".4" /></Svg></TrayIcon>
        <TrayIcon $w={24}><Svg w={17} h={17}><path d="M2.5 1v4M6.5 1v4M1 5.5h7v2q0 2.5-3.5 2.500T1 7.5zM4.5 10v6" stroke="#fff" strokeWidth="1.4" /><rect x="10" y="3.5" width="6" height="12.5" stroke="#fff" strokeWidth="1.3" /><path d="M11.5 2h3" stroke="#fff" strokeWidth="2" /><path d="M13 6v8" stroke="#fff" strokeWidth="3" /></Svg></TrayIcon>
        <TrayIcon $w={25}><Svg w={16} h={16}><path d="M6.5 3.5H15V11H5.5M10 11v3.5M6 14.5h8.5" stroke="#fff" strokeWidth="1.4" /><path d="M1 1h4v4H1zM3 5v9.500h5" stroke="#fff" strokeWidth="1.3" /></Svg></TrayIcon>
        <TrayIcon $w={16}><Svg w={16} h={17}><path d="M1 5.5h3L8 1v13l-4-4H1z" fill="#fff" stroke="#7d6326" strokeWidth=".5" /><circle cx="10.5" cy="11.5" r="3.9" fill="#f4dada" stroke="#d9201c" strokeWidth="1.7" /><path d="M8 9l5 5" stroke="#d9201c" strokeWidth="1.6" /></Svg></TrayIcon>
        <Clock>10:51<br />24/12/2018</Clock>
      </Tray>
    </Taskbar>
  );
}

export default function App() {
  return (
    <Screen>
      <Global />
      <BrowserChrome />
      <Viewport>
        <PageContent />
        <Scrollbar>
          <ScrollTop>
            <ScrollArrow><Svg w={9} h={6}><path d="M.8 5.2L4.5 1.5l3.7 3.7" stroke="#505050" strokeWidth="1.9" /></Svg></ScrollArrow>
            <ScrollThumb />
          </ScrollTop>
          <ScrollArrow><Svg w={9} h={6}><path d="M.8.8l3.7 3.7L8.2.8" stroke="#505050" strokeWidth="1.9" /></Svg></ScrollArrow>
        </Scrollbar>
      </Viewport>
      <Tasks />
    </Screen>
  );
}
